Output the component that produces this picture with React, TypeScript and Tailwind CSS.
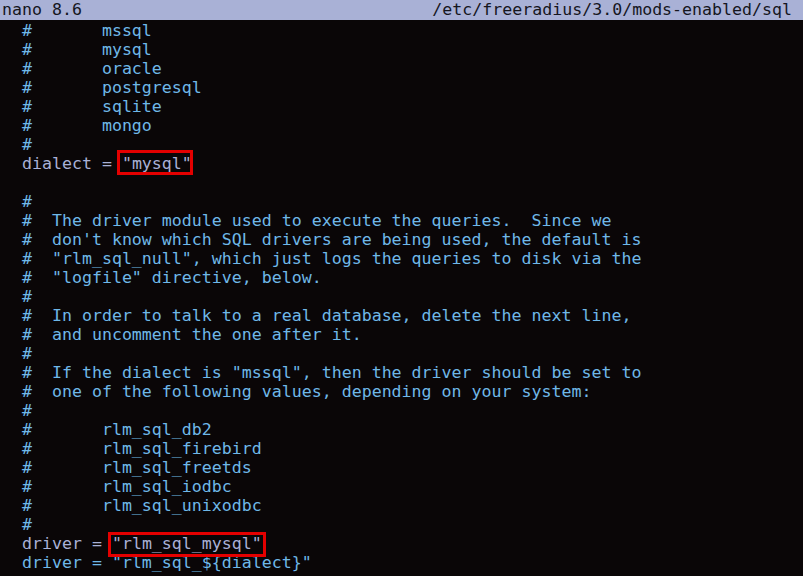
const C = "text-[#6fb8e8]";
const T = "text-[#a9b1d6]";

const comments: string[] = [
  "#",
  "#  The driver module used to execute the queries.  Since we",
  "#  don't know which SQL drivers are being used, the default is",
  '#  "rlm_sql_null", which just logs the queries to disk via the',
  '#  "logfile" directive, below.',
  "#",
  "#  In order to talk to a real database, delete the next line,",
  "#  and uncomment the one after it.",
  "#",
  '#  If the dialect is "mssql", then the driver should be set to',
  "#  one of the following values, depending on your system:",
  "#",
  "#       rlm_sql_db2",
  "#       rlm_sql_firebird",
  "#       rlm_sql_freetds",
  "#       rlm_sql_iodbc",
  "#       rlm_sql_unixodbc",
  "#",
];

function Boxed({ children, box }: { children: string; box: string }) {
  return (
    <span className="relative inline-block">
      {children}
      <span className={"absolute border-[3px] border-[#e40000] " + box} />
    </span>
  );
}

export default function App() {
  return (
    <div
      className="w-[803px] h-[576px] overflow-hidden bg-[#0a0607] whitespace-pre text-[16.6px] leading-[19px]"
      style={{ fontFamily: '"DejaVu Sans Mono", monospace' }}
    >
      {/* barra de título de nano */}
      <div className="h-[20px] bg-[#a9b1d6] text-[#15161e] flex justify-between pl-[2px] pr-[11px] leading-[20px]">
        <span>nano 8.6</span>
        <span>/etc/freeradius/3.0/mods-enabled/sql</span>
      </div>

      <div className="pl-[2px] pt-[1px]">
        {["mssql", "mysql", "oracle", "postgresql", "sqlite", "mongo"].map((d) => (
          <div key={d} className={C}>{"  #       " + d}</div>
        ))}
        <div className={C}>{"  #"}</div>
        <div className={T}>
          {"  dialect = "}
          <Boxed box="-left-[5px] -right-[1px] -top-[4px] -bottom-[2px]">"mysql"</Boxed>
        </div>
        <div>{" "}</div>
        {comments.map((l, i) => (
          <div key={i} className={C}>{"  " + l}</div>
        ))}
        <div className={T}>
          {"  driver = "}
          <Boxed box="-left-[4px] -right-[4px] -top-[2px] -bottom-[4px]">"rlm_sql_mysql"</Boxed>
        </div>
        <div className={C}>{'  driver = "rlm_sql_${dialect}"'}</div>
      </div>
    </div>
  );
}
